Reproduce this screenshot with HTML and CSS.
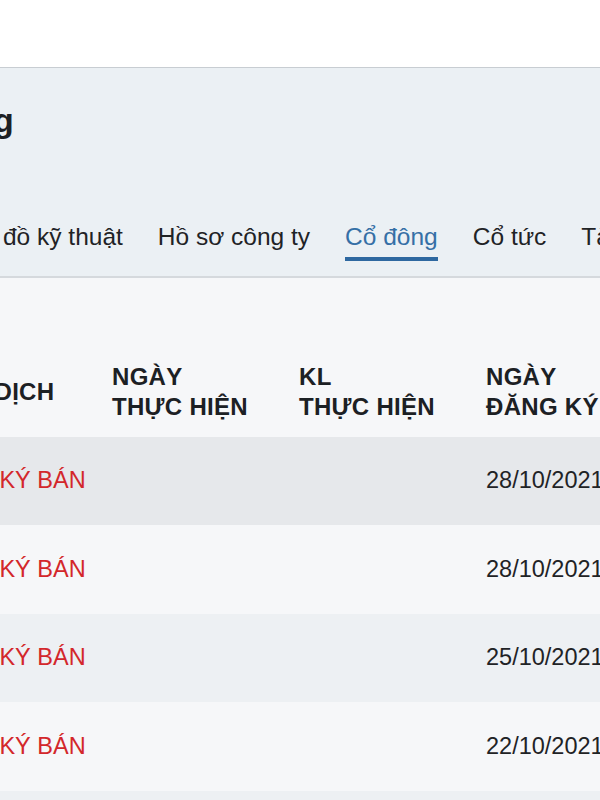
FILE: index.html
```html
<!DOCTYPE html>
<html lang="vi">
<head>
    <meta charset="UTF-8">
    <meta name="viewport" content="width=device-width, initial-scale=1.0">
    <title>Cổ đông</title>
    <link rel="stylesheet" href="styles.css">
</head>
<body>
    <div class="page">
        <div class="topbar"></div>

        <div class="company">
            <h1 class="company-name">Ngân hàng</h1>
            <nav class="tabs">
                <a class="tab">Tổng quan</a>
                <a class="tab">Biểu đồ kỹ thuật</a>
                <a class="tab">Hồ sơ công ty</a>
                <a class="tab active">Cổ đông</a>
                <a class="tab">Cổ tức</a>
                <a class="tab">Tài chính</a>
            </nav>
        </div>

        <div class="content">
            <div class="table">
                <div class="row head">
                    <div class="cell">GIAO DỊCH</div>
                    <div class="cell">NGÀY<br>THỰC HIỆN</div>
                    <div class="cell">KL<br>THỰC HIỆN</div>
                    <div class="cell">NGÀY<br>ĐĂNG KÝ</div>
                </div>
                <div class="row hover">
                    <div class="cell sell">ĐĂNG KÝ BÁN</div>
                    <div class="cell"></div>
                    <div class="cell"></div>
                    <div class="cell">28/10/2021</div>
                </div>
                <div class="row">
                    <div class="cell sell">ĐĂNG KÝ BÁN</div>
                    <div class="cell"></div>
                    <div class="cell"></div>
                    <div class="cell">28/10/2021</div>
                </div>
                <div class="row odd">
                    <div class="cell sell">ĐĂNG KÝ BÁN</div>
                    <div class="cell"></div>
                    <div class="cell"></div>
                    <div class="cell">25/10/2021</div>
                </div>
                <div class="row">
                    <div class="cell sell">ĐĂNG KÝ BÁN</div>
                    <div class="cell"></div>
                    <div class="cell"></div>
                    <div class="cell">22/10/2021</div>
                </div>
                <div class="row odd">
                    <div class="cell sell">ĐĂNG KÝ BÁN</div>
                    <div class="cell"></div>
                    <div class="cell"></div>
                    <div class="cell">21/10/2021</div>
                </div>
            </div>
        </div>
    </div>
</body>
</html>
```

FILE: styles.css
```css
body {
    margin: 0;
    font-family: "Liberation Sans", Arial, sans-serif;
    color: #1f2326;
    background-color: #f6f7f9;
}
.page {
    width: 600px;
    height: 800px;
    overflow: hidden;
}
.topbar {
    height: 67px;
    background-color: #fff;
    border-bottom: 1px solid #c8cdd2;
}
.company {
    height: 208px;
    background-color: #ebf0f4;
    border-bottom: 2px solid #d5d9dd;
    display: flex;
    flex-direction: column;
}
.company-name {
    margin: 32px 0 0 -162px;
    font-size: 34px;
    line-height: 40px;
    font-weight: bold;
    white-space: nowrap;
    color: #1c2024;
}
.tabs {
    display: flex;
    margin: auto 0 15px -205px;
    white-space: nowrap;
}
.tab {
    font-size: 24.5px;
    line-height: 30px;
    padding-bottom: 5px;
    margin-right: 35px;
    border-bottom: 4px solid transparent;
    color: #1f2326;
}
.tab.active {
    color: #356fa6;
    border-bottom-color: #2e68a0;
}
.content {
    padding-top: 70px;
}
.table {
    margin-left: -75px;
}
.row {
    display: grid;
    grid-template-columns: repeat(4, 187px);
    height: 88.5px;
    align-items: center;
    font-size: 23.5px;
    white-space: nowrap;
}
.row.head {
    font-size: 24px;
    line-height: 30px;
    font-weight: bold;
    letter-spacing: 0.3px;
    color: #1c2024;
}
.row.hover {
    background-color: #e6e8eb;
}
.row.odd {
    background-color: #edf0f3;
}
.sell {
    color: #d3272b;
}
```
